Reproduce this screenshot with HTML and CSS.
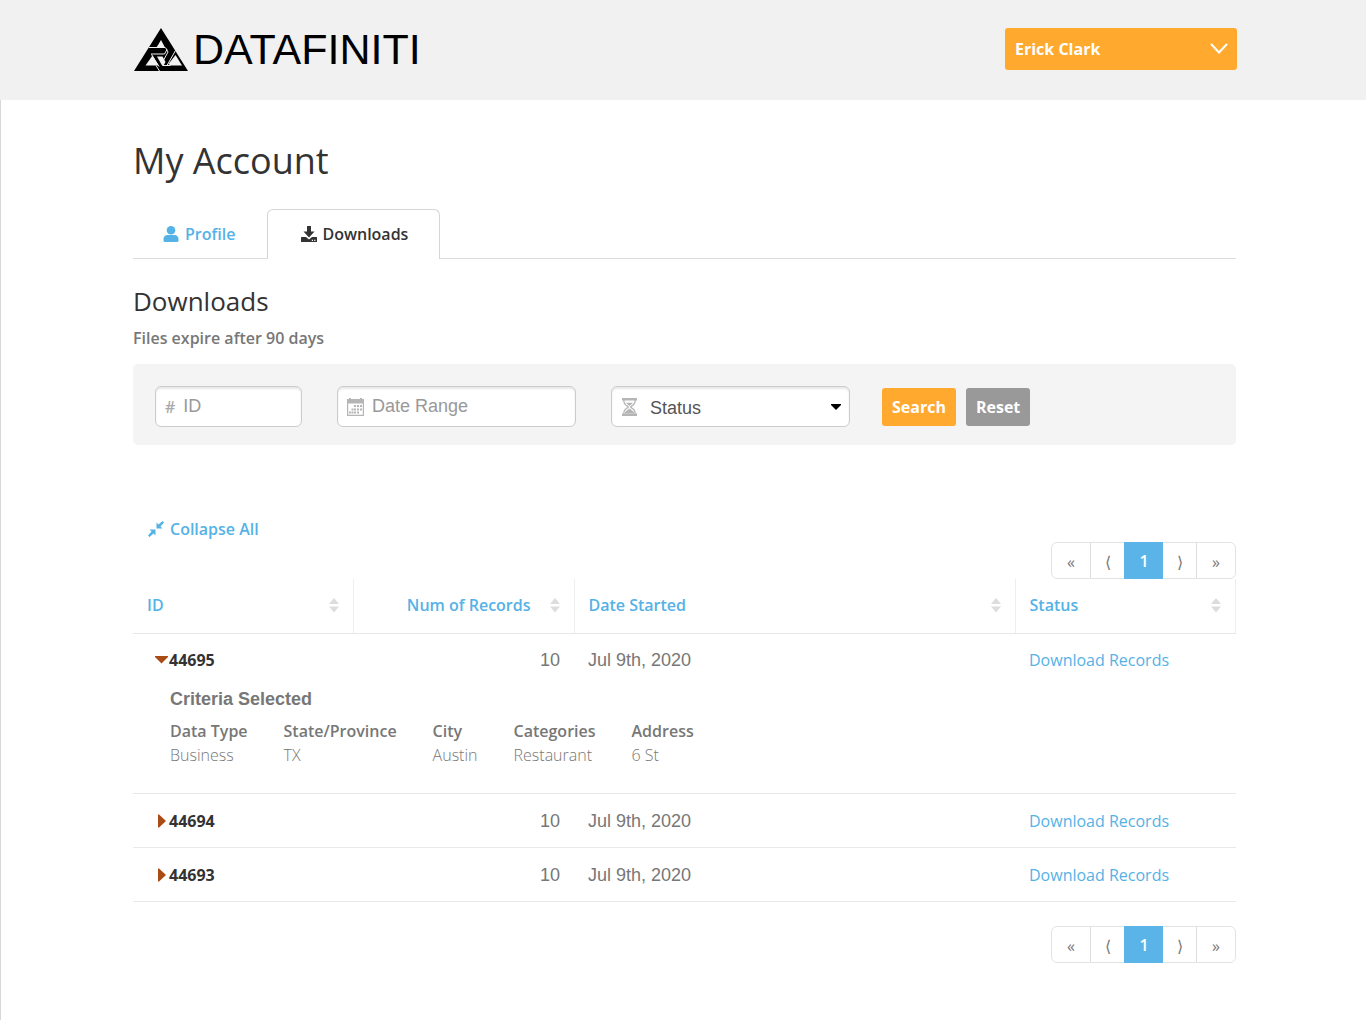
FILE: index.html
```html
<!DOCTYPE html>
<html lang="en">
<head>
<meta charset="utf-8">
<meta name="viewport" content="width=device-width, initial-scale=1">
<title>My Account - Datafiniti</title>
<link rel="stylesheet" href="styles.css">
</head>
<body>
<svg width="0" height="0" class="sprite" aria-hidden="true">
  <symbol id="sort" viewBox="0 0 10 16"><path d="M5 1L10 7H0zM0 9.500H10L5 15.500z"/></symbol>
  <symbol id="right" viewBox="0 0 14 14"><path d="M3 0.500L4 0.500L11 7L4 13.500L3 13.500z"/></symbol>
  <symbol id="down" viewBox="0 0 14 14"><path d="M0 3H13V4L6.500 10.500L0 4z"/></symbol>
</svg>
<header class="top">
  <a class="brand" href="#">
    <svg class="brand-mark" viewBox="0 0 54 43" aria-hidden="true">
      <path d="M27 0L54 43H0z"/>
      <g class="cut">
        <path d="M27 12L31 19.500H22.500z"/>
        <path d="M18.500 27.500L24.500 37.500H11.500z"/>
        <path d="M41.500 27L48 37.500H36.500L34.500 36z"/>
        <path d="M23 28.500H28.500L31.500 34L29.500 37.500H28z"/>
      </g>
      <g class="line">
        <path d="M15 19.500H31M17 26H30.500L33 21.500M31.500 19.500L34 24L28.500 34M41.500 22.500L33 37.500M17.500 26.500L25 38.500M22 37.500L25.500 43M28.500 37.500H36.500"/>
      </g>
    </svg>
    <span class="wordmark">DATAFINITI</span>
  </a>
  <button class="user" type="button">Erick Clark
    <svg width="18" height="12" viewBox="0 0 18 12" aria-hidden="true"><path d="M1.500 1.500L9 9.500L16.500 1.500"/></svg>
  </button>
</header>

<main class="page">
  <h1>My Account</h1>
  <nav class="tabs">
    <a class="tab" href="#">
      <svg width="16" height="16" viewBox="0 0 16 16" aria-hidden="true"><circle cx="8" cy="4.300" r="4.300"/><path d="M4.500 9H11.500C14 9 15.500 11 15.500 13V14.500Q15.500 16 14 16H2Q.5 16 .5 14.500V13C.5 11 2 9 4.500 9z"/></svg>
      Profile</a>
    <a class="tab active" href="#" aria-current="page">
      <svg width="16" height="16" viewBox="0 0 16 16" aria-hidden="true"><path d="M6 0H10V5.500H13.500L8 11.500L2.500 5.500H6z"/><path fill-rule="evenodd" d="M0 11.500Q0 11 .5 11H5L8 13.500L11 11H15.500Q16 11 16 11.500V15.500Q16 16 15.500 16H.5Q0 16 0 15.500zM10.800 13.800V14.900H12V13.800zM13.200 13.800V14.900H14.400V13.800z"/></svg>
      Downloads</a>
  </nav>

  <h2>Downloads</h2>
  <p class="note">Files expire after 90 days</p>

  <form class="filters">
    <label class="field field-id">
      <span class="hash" aria-hidden="true">#</span>
      <input type="text" placeholder="ID" aria-label="ID">
    </label>
    <label class="field">
      <svg width="17" height="18" viewBox="0 0 17 18" aria-hidden="true"><path fill-rule="evenodd" d="M0 1H2V0H4V1H13V0H15V1H17V18H0zM1.200 5.500V16.800H15.800V5.500z"/><path d="M7 7h2v2H7zM10 7h2v2h-2zM13 7h2v2h-2zM4.500 10.500h2v2h-2zM7 10.500h2v2H7zM10 10.500h2v2h-2zM13 10.500h2v2h-2zM2 13.500h2v2H2zM4.500 13.500h2v2h-2zM7 13.500h2v2H7zM10 13.500h2v2h-2z"/></svg>
      <input type="text" placeholder="Date Range" aria-label="Date Range">
    </label>
    <label class="field field-status">
      <svg width="17" height="18" viewBox="0 0 17 18" aria-hidden="true"><path fill-rule="evenodd" d="M1 0H16V2.500H14.800C14.800 6 13 7.500 10.500 9C13 10.500 14.800 12 14.800 15.500H16V18H1V15.500H2.200C2.200 12 4 10.500 6.500 9C4 7.500 2.200 6 2.200 2.500H1zM3.500 2.500C3.500 6 6 7 7.800 8.300V9.700C6 11 3.500 12 3.500 15.500H13.500C13.500 12 11 11 9.200 9.700V8.300C11 7 13.500 6 13.500 2.500z"/><path d="M5 4.800H12L8.500 8zM8.500 10.500L13 14V15.500H4V14z"/></svg>
      <select aria-label="Status"><option>Status</option><option>Complete</option><option>Pending</option></select>
      <svg class="arrow" width="10" height="6" viewBox="0 0 10 6" aria-hidden="true"><path d="M0 0H10V1L5 6L0 1z"/></svg>
    </label>
    <div class="actions">
      <button class="btn" type="submit">Search</button>
      <button class="btn btn-reset" type="reset">Reset</button>
    </div>
  </form>

  <div class="toolbar">
    <a class="collapse" href="#">
      <svg width="16" height="16" viewBox="0 0 16 16" aria-hidden="true"><path d="M1.500 8.500H7.500V14.500L5.500 12.500L1.500 16L0 14.500L3.500 10.500zM8.500 1.500L10.500 3.500L14.500 0L16 1.500L12.500 5.500L14.500 7.500H8.500z"/></svg>
      Collapse All</a>
    <nav class="pager" aria-label="Pages, top">
      <a href="#">«</a><a href="#">⟨</a><a class="current" href="#" aria-current="page">1</a><a href="#">⟩</a><a href="#">»</a>
    </nav>
  </div>

  <table class="records">
    <thead>
      <tr>
        <th scope="col"><span class="head">ID <svg><use href="#sort"/></svg></span></th>
        <th scope="col" class="num"><span class="head">Num of Records <svg><use href="#sort"/></svg></span></th>
        <th scope="col" class="wide"><span class="head">Date Started <svg><use href="#sort"/></svg></span></th>
        <th scope="col"><span class="head">Status <svg><use href="#sort"/></svg></span></th>
      </tr>
    </thead>
    <tbody>
      <tr class="open">
        <td><button class="toggle" type="button" aria-expanded="true"><svg><use href="#down"/></svg>44695</button></td>
        <td class="num">10</td>
        <td>Jul 9th, 2020</td>
        <td><a href="#">Download Records</a></td>
      </tr>
      <tr>
        <td class="detail" colspan="4">
          <h3>Criteria Selected</h3>
          <dl class="criteria">
            <div><dt>Data Type</dt><dd>Business</dd></div>
            <div><dt>State/Province</dt><dd>TX</dd></div>
            <div><dt>City</dt><dd>Austin</dd></div>
            <div><dt>Categories</dt><dd>Restaurant</dd></div>
            <div><dt>Address</dt><dd>6 St</dd></div>
          </dl>
        </td>
      </tr>
      <tr>
        <td><button class="toggle" type="button" aria-expanded="false"><svg><use href="#right"/></svg>44694</button></td>
        <td class="num">10</td>
        <td>Jul 9th, 2020</td>
        <td><a href="#">Download Records</a></td>
      </tr>
      <tr>
        <td><button class="toggle" type="button" aria-expanded="false"><svg><use href="#right"/></svg>44693</button></td>
        <td class="num">10</td>
        <td>Jul 9th, 2020</td>
        <td><a href="#">Download Records</a></td>
      </tr>
    </tbody>
  </table>

  <div class="footer-pager">
    <nav class="pager" aria-label="Pages, bottom">
      <a href="#">«</a><a href="#">⟨</a><a class="current" href="#" aria-current="page">1</a><a href="#">⟩</a><a href="#">»</a>
    </nav>
  </div>
</main>
</body>
</html>
```
FILE: styles.css
```css
* { box-sizing: border-box; }
body {
  margin: 0;
  display: flex;
  flex-direction: column;
  min-height: 100vh;
  background: #fff;
  color: #777;
  font: 16px/24px "Open Sans", sans-serif;
}
a { color: #55b2e6; text-decoration: none; }
button, input, select { font: inherit; }
h1, h2, h3, p, dl, dd { margin: 0; }
.sprite { position: absolute; }

.top {
  height: 100px;
  padding: 0 129px 2px 134px;
  display: flex;
  align-items: center;
  justify-content: space-between;
  background: #f1f1f1;
}
.brand { display: flex; align-items: center; gap: 5px; color: #000; }
.brand-mark { width: 54px; height: 43px; }
.cut { fill: #f1f1f1; }
.line { fill: none; stroke: #f1f1f1; stroke-width: 1; }
.wordmark { font: 43px/44px "Liberation Sans", sans-serif; }
.user {
  width: 232px;
  height: 42px;
  padding: 0 9px 0 10px;
  display: flex;
  align-items: center;
  justify-content: space-between;
  border: 0;
  border-radius: 3px;
  background: #ffa92f;
  color: #fff;
  font-weight: 700;
}
.user svg { fill: none; stroke: #fff; stroke-width: 2; stroke-linecap: round; }

.page { flex: 1; padding: 36px 130px 40px 133px; border-left: 1px solid #d8d8d8; padding-left: 132px; }
h1 { color: #333; font-size: 36px; line-height: 49px; font-weight: 400; }
.tabs { display: flex; margin-top: 24px; border-bottom: 1px solid #ddd; }
.tab {
  height: 50px;
  margin-bottom: -1px;
  padding: 0 31px 2px 29px;
  display: flex;
  align-items: center;
  gap: 6px;
  border: 1px solid transparent;
  border-bottom: 0;
  border-radius: 6px 6px 0 0;
  font-weight: 600;
}
.tab svg, .collapse svg { fill: currentColor; }
.tab.active { padding-left: 33px; gap: 5px; border-color: #d5d5d5; background: #fff; color: #333; }
h2 { margin-top: 24px; color: #333; font-size: 26px; line-height: 36px; font-weight: 400; }
.note { margin-top: 7px; font-weight: 600; }

.filters {
  margin-top: 14px;
  padding: 22px 22px 18px;
  display: flex;
  align-items: center;
  gap: 35px;
  border-radius: 5px;
  background: #f4f4f4;
}
.field {
  width: 239px;
  height: 41px;
  padding: 0 8px 0 9px;
  display: flex;
  align-items: center;
  gap: 8px;
  border: 1px solid #ccc;
  border-radius: 6px;
  background: #fff;
  box-shadow: inset 0 2px 2px #e8e8e8;
}
.field-id { width: 147px; }
.field svg { flex: none; fill: #b5b5b5; }
.field .arrow { fill: #000; }
.hash { color: #aaa; font-weight: 600; }
.field input, .field select {
  flex: 1;
  min-width: 0;
  height: 38px;
  padding: 0;
  appearance: none;
  border: 0;
  background: none;
  color: #555;
  font: 18px/24px "Liberation Sans", sans-serif;
}
.field select { padding: 3px 0 0 4px; }
.field input::placeholder { color: #999; opacity: 1; }
.actions { display: flex; gap: 10px; margin-left: -3px; }
.btn {
  height: 38px;
  padding: 0 10px;
  border: 0;
  border-radius: 3px;
  background: #ffa92f;
  color: #fff;
  font-weight: 700;
}
.btn-reset { background: #999; }

.toolbar { margin-top: 72px; display: flex; justify-content: space-between; }
.collapse { height: 24px; padding-left: 15px; display: flex; align-items: center; gap: 6px; font-weight: 600; }
.toolbar .pager { margin-top: 25px; }
.pager {
  height: 37px;
  display: flex;
  border: 1px solid #e3e3e3;
  border-radius: 6px;
}
.pager a { width: 34px; padding-top: 7px; text-align: center; color: #777; }
.pager a + a { border-left: 1px solid #ddd; }
.pager a:first-child { width: 38px; }
.pager a:last-child { width: 39px; }
.pager .current {
  width: 39px;
  margin: -1px 0;
  background: #5bb4e8;
  border-color: #5bb4e8;
  color: #fff;
  font-weight: 600;
}
.pager .current + a { border-left: 0; width: 33px; }

.records { width: 100%; table-layout: fixed; border-collapse: collapse; }
.records th, .records td { height: 54px; padding: 0 14px; text-align: left; border-bottom: 1px solid #e8e8e8; }
.records th { width: 20%; padding-bottom: 2px; border-right: 1px solid #eee; color: #55b2e6; font-weight: 600; }
.records th.wide { width: 40%; }
.records .head { display: flex; align-items: center; justify-content: space-between; }
.records .num .head { justify-content: flex-end; gap: 19px; }
.head svg { width: 10px; height: 16px; fill: #ddd; }
.records td { font: 18px/24px "Liberation Sans", sans-serif; }
.records td.num { text-align: right; }
.records td a { font: 500 16px/24px "Open Sans", sans-serif; }
.records .open td { border-bottom: 0; }
.toggle {
  padding: 0 0 0 8px;
  display: flex;
  align-items: center;
  border: 0;
  background: none;
  color: #333;
  font: 700 16px/24px "Open Sans", sans-serif;
}
.toggle svg { width: 14px; height: 14px; fill: #a84b14; }
.records td.detail { padding: 0 37px 26px; }
.detail h3 { font-size: 18px; line-height: 24px; }
.criteria { margin-top: 8px; display: flex; gap: 36px; font: 16px/24px "Open Sans", sans-serif; }
.criteria dt { font-weight: 600; }
.criteria dd { font-weight: 300; }
.footer-pager { margin-top: 24px; display: flex; justify-content: flex-end; }
```
